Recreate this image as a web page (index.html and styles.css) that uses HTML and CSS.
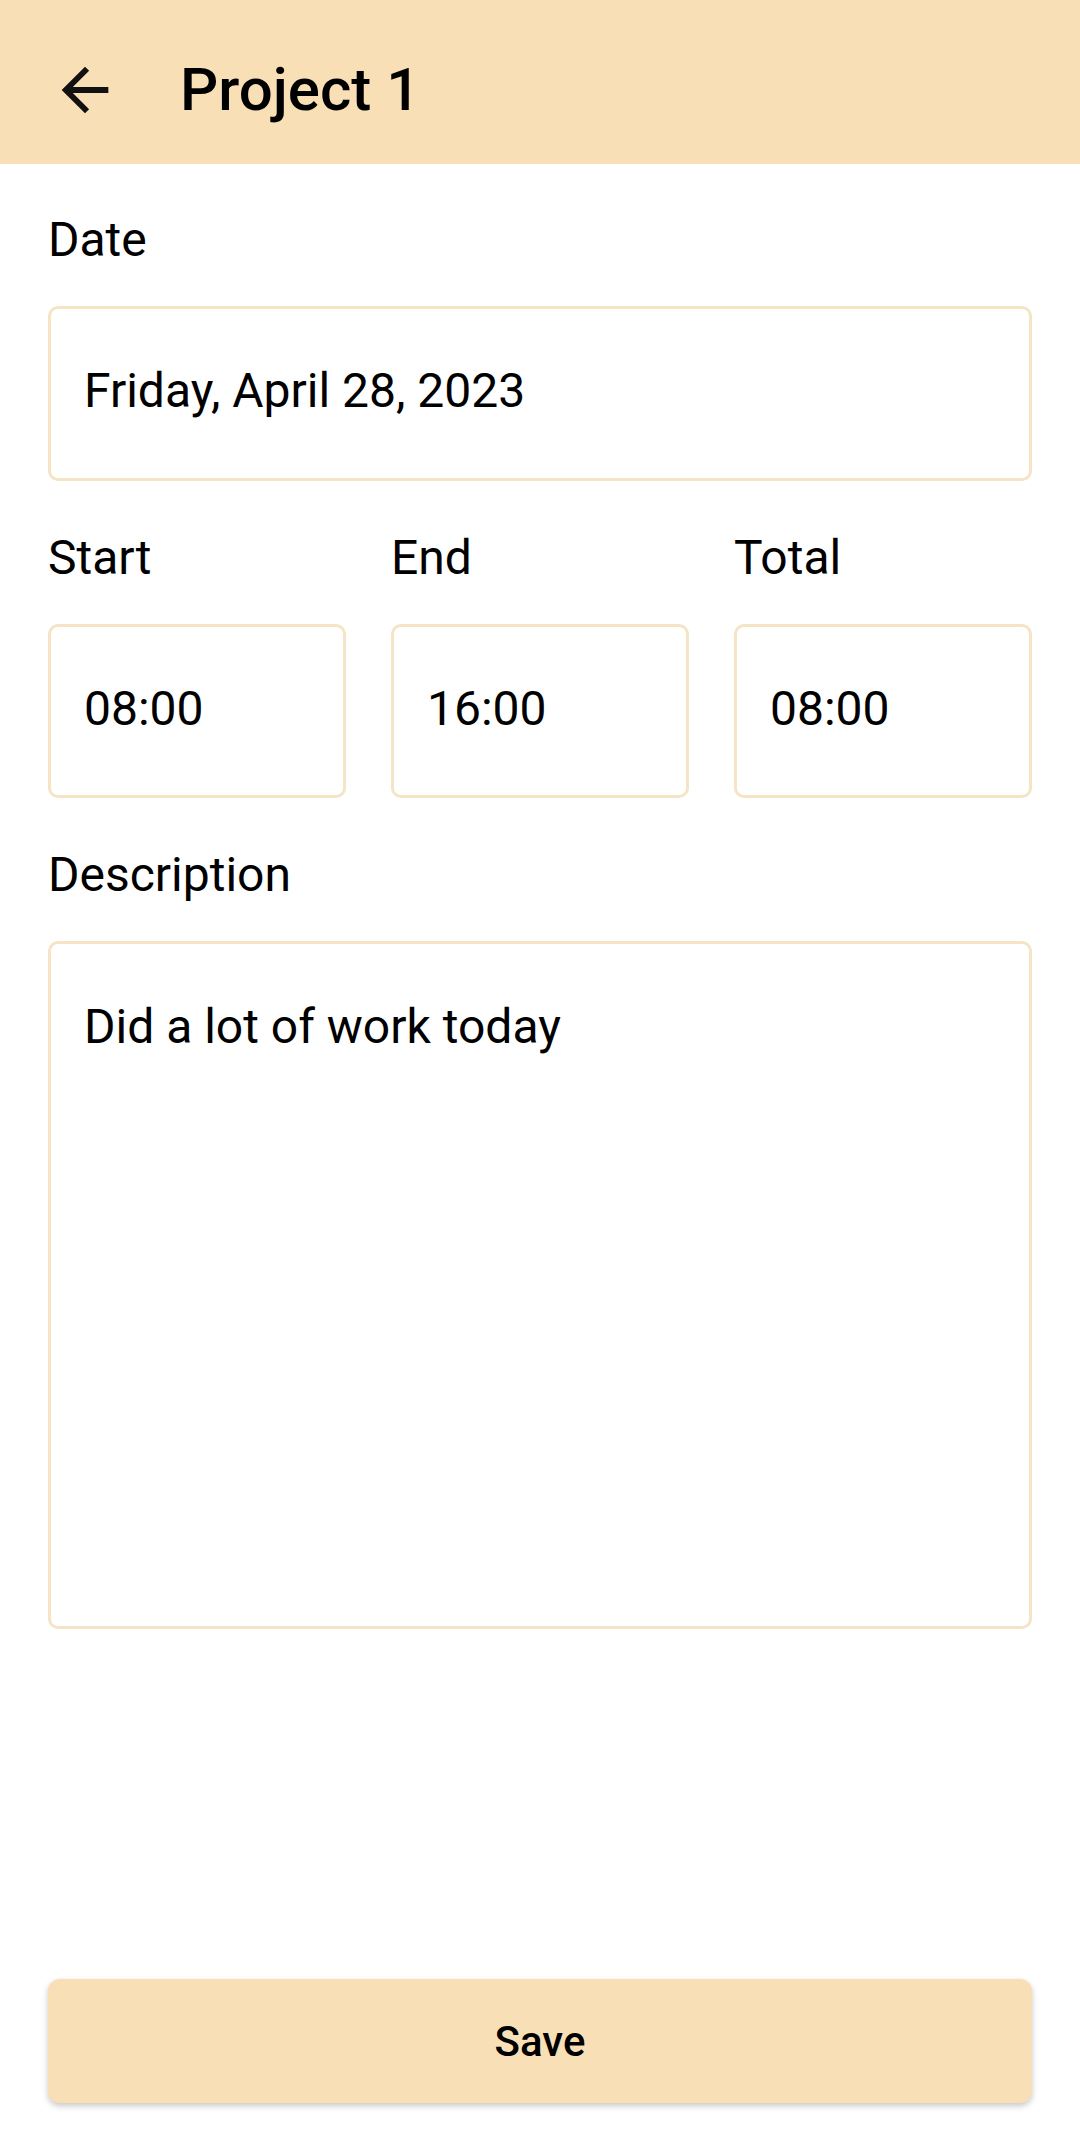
FILE: index.html
```html
<!DOCTYPE html>
<html lang="en">
<head>
<meta charset="utf-8">
<title>Project 1</title>
<link rel="stylesheet" href="styles.css">
</head>
<body>
<header class="appbar">
  <button class="back" aria-label="Back">
    <svg viewBox="0 0 24 24" width="70" height="70"><path d="M20 11H7.83l5.59-5.59L12 4l-8 8 8 8 1.41-1.41L7.83 13H20v-2z" fill="#111"/></svg>
  </button>
  <h1 class="title">Project 1</h1>
</header>
<main class="form">
  <div class="field">
    <div class="label">Date</div>
    <div class="input">Friday, April 28, 2023</div>
  </div>
  <div class="row">
    <div class="field">
      <div class="label">Start</div>
      <div class="input">08:00</div>
    </div>
    <div class="field">
      <div class="label">End</div>
      <div class="input">16:00</div>
    </div>
    <div class="field">
      <div class="label">Total</div>
      <div class="input">08:00</div>
    </div>
  </div>
  <div class="field">
    <div class="label">Description</div>
    <div class="input textarea">Did a lot of work today</div>
  </div>
  <button class="save">Save</button>
</main>
</body>
</html>
```
FILE: styles.css
```css
* { box-sizing: border-box; }
html, body { margin: 0; padding: 0; }
body {
  width: 1080px;
  height: 2139px;
  display: flex;
  flex-direction: column;
  font-family: Roboto, "Liberation Sans", sans-serif;
  color: #111;
  background: #fff;
}
.appbar {
  height: 164px;
  padding-top: 16px;
  background: #f9dfb5;
  display: flex;
  align-items: center;
  flex-shrink: 0;
}
.back {
  width: 70px;
  height: 70px;
  margin-left: 50px;
  padding: 0;
  border: none;
  background: none;
  display: flex;
}
.title {
  margin: 0 0 0 60px;
  font-size: 60px;
  font-weight: 500;
  line-height: 70px;
  color: #000;
}
.form {
  flex: 1;
  display: flex;
  flex-direction: column;
  padding: 48px 48px 36px;
}
.field { margin-bottom: 49px; }
.row {
  display: grid;
  grid-template-columns: repeat(3, 1fr);
  column-gap: 45px;
}
.label {
  font-size: 48px;
  line-height: 56px;
  margin-bottom: 38px;
  color: #000;
}
.input {
  height: 175px;
  border: 3px solid #f5e4c6;
  border-radius: 10px;
  padding: 54px 33px 0;
  font-size: 48px;
  line-height: 56px;
  color: #000;
}
.row .input { height: 174px; padding-top: 54px; }
.textarea { height: 688px; padding-top: 55px; }
.save {
  margin-top: auto;
  height: 124px;
  width: 100%;
  border: none;
  border-radius: 12px;
  background: #f9dfb5;
  box-shadow: 0 3px 6px rgba(0, 0, 0, 0.22);
  font-family: Roboto, "Liberation Sans", sans-serif;
  font-size: 42px;
  font-weight: 500;
  color: #000;
}
```
